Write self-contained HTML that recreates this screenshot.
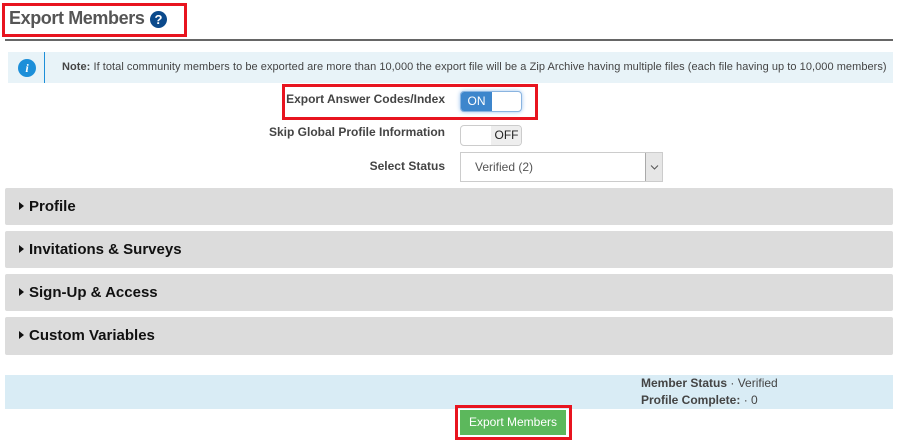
<!DOCTYPE html>
<html><head><meta charset="utf-8"><style>
*{margin:0;padding:0;box-sizing:border-box}
body{width:901px;height:442px;background:#fff;position:relative;overflow:hidden;font-family:"Liberation Sans",sans-serif;color:#444}
.a{position:absolute;white-space:nowrap}
.red{position:absolute;border:3px solid #e8141f}
.bar{position:absolute;left:5px;width:888px;background:#dcdcdc;border-radius:2px;font-weight:bold;font-size:15px;color:#111;padding-left:14px;line-height:37px}
.bar:before{content:"";display:inline-block;border-left:5px solid #111;border-top:4px solid transparent;border-bottom:4px solid transparent;margin-right:5px;vertical-align:1px}
.lbl{position:absolute;right:456px;font-size:12px;font-weight:bold;color:#444;white-space:nowrap}
</style></head><body>
<div class="red" style="left:2px;top:3px;width:185px;height:34px"></div>
<div class="a" style="left:9px;top:8px;font-size:18px;font-weight:bold;color:#555;letter-spacing:-0.4px">Export Members</div>
<div class="a" style="left:150px;top:11px;width:17px;height:17px;border-radius:50%;background:#0b4a8c;color:#fff;font-weight:bold;font-size:13px;text-align:center;line-height:17px">?</div>
<div class="a" style="left:5px;top:39px;width:888px;height:2px;background:#666"></div>
<div class="a" style="left:8px;top:52px;width:885px;height:31px;background:#e8f3f8"></div>
<div class="a" style="left:18px;top:59px;width:18px;height:18px;border-radius:50%;background:#1c8fd9;color:#fff;font:italic bold 12px 'Liberation Serif',serif;text-align:center;line-height:18px">i</div>
<div class="a" style="left:44px;top:52px;width:1px;height:31px;background:#1c8fd9"></div>
<div class="a" style="left:62px;top:61px;font-size:11px;color:#444;letter-spacing:0.05px"><b>Note:</b> If total community members to be exported are more than 10,000 the export file will be a Zip Archive having multiple files (each file having up to 10,000 members)</div>
<div class="red" style="left:282px;top:84px;width:256px;height:36px"></div>
<div class="lbl" style="top:92px">Export Answer Codes/Index</div>
<div class="a" style="left:460px;top:91px;width:62px;height:21px;border:1px solid #8ab4e0;border-radius:4px;overflow:hidden;box-shadow:0 0 4px #9cc4ee;background:#fff"><div style="width:31px;height:100%;background:#3d86cc;color:#fff;font-size:12px;text-align:center;line-height:19px">ON</div></div>
<div class="lbl" style="top:125px">Skip Global Profile Information</div>
<div class="a" style="left:460px;top:125px;width:62px;height:21px;border:1px solid #ccc;border-radius:4px;overflow:hidden;background:#fff"><div style="margin-left:30px;width:31px;height:100%;background:#eee;color:#222;font-size:12px;text-align:center;line-height:19px">OFF</div></div>
<div class="lbl" style="top:159px">Select Status</div>
<div class="a" style="left:460px;top:152px;width:203px;height:30px;border:1px solid #ccc;background:#fff;font-size:12px;color:#555;line-height:28px;padding-left:14px">Verified (2)<div style="position:absolute;right:0;top:0;width:17px;height:28px;background:#e6e6e6;border-left:1px solid #aaa"><svg width="17" height="28" style="position:absolute;left:0;top:0"><path d="M5 12.5 L8.5 16 L12 12.5" fill="none" stroke="#555" stroke-width="1"/></svg></div></div>
<div class="bar" style="top:188px;height:37px">Profile</div>
<div class="bar" style="top:231px;height:37px">Invitations &amp; Surveys</div>
<div class="bar" style="top:274px;height:37px">Sign-Up &amp; Access</div>
<div class="bar" style="top:317px;height:38px">Custom Variables</div>
<div class="a" style="left:5px;top:375px;width:888px;height:34px;background:#d9ecf5"></div>
<div class="a" style="left:641px;top:376px;font-size:12px;color:#444"><b>Member Status</b> · Verified</div>
<div class="a" style="left:641px;top:393px;font-size:12px;color:#444"><b>Profile Complete:</b> · 0</div>
<div class="red" style="left:455px;top:405px;width:117px;height:35px"></div>
<div class="a" style="left:460px;top:410px;width:106px;height:25px;background:#5cb85c;color:#fff;font-size:12px;text-align:center;line-height:25px">Export Members</div>
</body></html>
